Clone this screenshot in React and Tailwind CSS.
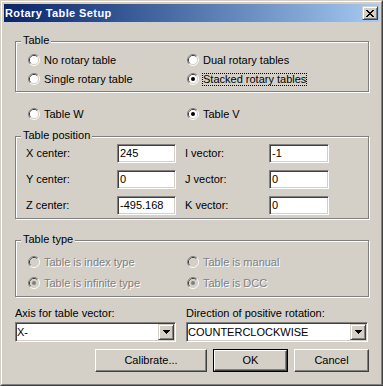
import React from "react";

function Radio({ checked, disabled }) {
  return (
    <svg width="12" height="12" viewBox="0 0 12 12" className="shrink-0 block">
      <path d="M2.11 9.89 A5.5 5.5 0 0 1 9.89 2.11" stroke="#808080" fill="none" />
      <path d="M9.89 2.11 A5.5 5.5 0 0 1 2.11 9.89" stroke="#ffffff" fill="none" />
      <path d="M2.82 9.18 A4.5 4.5 0 0 1 9.18 2.82" stroke="#404040" fill="none" />
      <path d="M9.18 2.82 A4.5 4.5 0 0 1 2.82 9.18" stroke="#d4d0c8" fill="none" />
      <circle cx="6" cy="6" r="4" fill={disabled ? "#d4d0c8" : "#ffffff"} />
      {checked && <circle cx="6" cy="6" r="2" fill={disabled ? "#808080" : "#000000"} />}
    </svg>
  );
}

function RadioRow({ label, checked, disabled, focus }) {
  return (
    <div className="flex items-center h-[14px]">
      <Radio checked={checked} disabled={disabled} />
      <span
        className={
          "ml-[3px] leading-[11px] border whitespace-nowrap " +
          (focus ? "border-dotted border-black " : "border-transparent ") +
          (disabled ? "text-[#808080] [text-shadow:1px_1px_0_#ffffff]" : "")
        }
      >
        {label}
      </span>
    </div>
  );
}

function Group({ label, className, children }) {
  return (
    <div
      className={
        "relative border border-[#808080] shadow-[1px_1px_0_#ffffff,inset_1px_1px_0_#ffffff] " +
        className
      }
    >
      <span className="absolute left-[5px] -top-[8px] px-[2px] bg-[#d4d0c8] leading-[13px] whitespace-nowrap">
        {label}
      </span>
      {children}
    </div>
  );
}

function Field({ value, className }) {
  return (
    <div
      className={
        "h-[19px] flex items-center bg-white pl-[2px] border border-t-[#808080] border-l-[#808080] border-r-white border-b-white shadow-[inset_1px_1px_0_#404040,inset_-1px_-1px_0_#d4d0c8] " +
        className
      }
    >
      {value}
    </div>
  );
}

function Arrow() {
  return (
    <svg width="7" height="4" viewBox="0 0 7 4" className="block">
      <rect x="0" y="0" width="7" height="1" fill="#000" />
      <rect x="1" y="1" width="5" height="1" fill="#000" />
      <rect x="2" y="2" width="3" height="1" fill="#000" />
      <rect x="3" y="3" width="1" height="1" fill="#000" />
    </svg>
  );
}

function Combo({ value }) {
  return (
    <div className="h-[20px] flex items-center bg-white border border-t-[#808080] border-l-[#808080] border-r-white border-b-white shadow-[inset_1px_1px_0_#404040,inset_-1px_-1px_0_#d4d0c8]">
      <span className="flex-1 pl-[1px] whitespace-nowrap">{value}</span>
      <div className="w-[16px] h-[16px] mr-[1px] flex items-center justify-center bg-[#d4d0c8] border border-t-[#d4d0c8] border-l-[#d4d0c8] border-r-[#404040] border-b-[#404040] shadow-[inset_1px_1px_0_#ffffff,inset_-1px_-1px_0_#808080]">
        <Arrow />
      </div>
    </div>
  );
}

function Button({ label, className, isDefault }) {
  const inner = (
    <div className="h-full w-full flex items-center justify-center bg-[#d4d0c8] border border-t-white border-l-white border-r-[#404040] border-b-[#404040] shadow-[inset_-1px_-1px_0_#808080]">
      {label}
    </div>
  );
  if (isDefault) {
    return <div className={"h-[23px] border border-black " + className}>{inner}</div>;
  }
  return <div className={"h-[23px] " + className}>{inner}</div>;
}

function CloseGlyph() {
  const rows = [
    [0, 1, 6, 7],
    [1, 2, 5, 6],
    [2, 3, 4, 5],
    [3, 4],
    [2, 3, 4, 5],
    [1, 2, 5, 6],
    [0, 1, 6, 7],
  ];
  return (
    <svg width="8" height="7" viewBox="0 0 8 7" className="block">
      {rows.map((cols, y) =>
        cols.map((x) => <rect key={y + "-" + x} x={x} y={y} width="1" height="1" fill="#000" />)
      )}
    </svg>
  );
}

function PosRow({ l1, v1, l2, v2 }) {
  return (
    <div className="flex items-center h-[19px]">
      <span className="w-[91px] whitespace-nowrap">{l1}</span>
      <Field value={v1} className="w-[59px]" />
      <span className="ml-[9px] w-[84px] whitespace-nowrap">{l2}</span>
      <Field value={v2} className="w-[60px]" />
    </div>
  );
}

export default function App() {
  return (
    <div className="w-[383px] h-[386px] bg-[#d4d0c8] border border-t-[#d4d0c8] border-l-[#d4d0c8] border-r-[#404040] border-b-[#404040] text-[11px] leading-[13px] text-black font-['Liberation_Sans',Arial,sans-serif] select-none">
      <div className="h-full border border-t-white border-l-white border-r-[#808080] border-b-[#808080] p-[2px] flex flex-col">
        <div className="h-[18px] shrink-0 flex items-center justify-between bg-linear-to-r from-[#0a246a] to-[#a6caf0] pl-[1px] pr-[1px]">
          <span className="text-white font-bold tracking-[0.4px] whitespace-nowrap">Rotary Table Setup</span>
          <div className="w-[16px] h-[14px] flex items-center justify-center bg-[#d4d0c8] border border-t-[#d4d0c8] border-l-[#d4d0c8] border-r-[#404040] border-b-[#404040] shadow-[inset_1px_1px_0_#ffffff,inset_-1px_-1px_0_#808080]">
            <CloseGlyph />
          </div>
        </div>

        <div className="flex-1 flex flex-col pl-[11px] pr-[10px] pt-[19px]">
          <Group label="Table" className="pt-[11px] pb-[5px] pl-[12px]">
            <div className="grid grid-cols-[159px_1fr] gap-y-[5px]">
              <RadioRow label="No rotary table" />
              <RadioRow label="Dual rotary tables" />
              <RadioRow label="Single rotary table" />
              <RadioRow label="Stacked rotary tables" checked focus />
            </div>
          </Group>

          <div className="mt-[15px] pl-[13px] grid grid-cols-[159px_1fr]">
            <RadioRow label="Table W" />
            <RadioRow label="Table V" checked />
          </div>

          <Group label="Table position" className="mt-[15px] pt-[7px] pb-[3px] pl-[10px]">
            <div className="flex flex-col gap-[7px]">
              <PosRow l1="X center:" v1="245" l2="I vector:" v2="-1" />
              <PosRow l1="Y center:" v1="0" l2="J vector:" v2="0" />
              <PosRow l1="Z center:" v1="-495.168" l2="K vector:" v2="0" />
            </div>
          </Group>

          <Group label="Table type" className="mt-[21px] pt-[14px] pb-[6px] pl-[12px]">
            <div className="grid grid-cols-[159px_1fr] gap-y-[7px]">
              <RadioRow label="Table is index type" disabled />
              <RadioRow label="Table is manual" disabled />
              <RadioRow label="Table is infinite type" checked disabled />
              <RadioRow label="Table is DCC" checked disabled />
            </div>
          </Group>

          <div className="mt-[10px] grid grid-cols-[161px_182px] gap-x-[10px]">
            <span className="h-[13px] whitespace-nowrap">Axis for table vector:</span>
            <span className="h-[13px] whitespace-nowrap">Direction of positive rotation:</span>
            <div className="mt-[2px]">
              <Combo value="X-" />
            </div>
            <div className="mt-[2px]">
              <Combo value="COUNTERCLOCKWISE" />
            </div>
          </div>

          <div className="mt-[7px] flex justify-end gap-[6px]">
            <Button label="Calibrate..." className="w-[112px]" />
            <Button label="OK" className="w-[75px]" isDefault />
            <Button label="Cancel" className="w-[75px]" />
          </div>
        </div>
      </div>
    </div>
  );
}
